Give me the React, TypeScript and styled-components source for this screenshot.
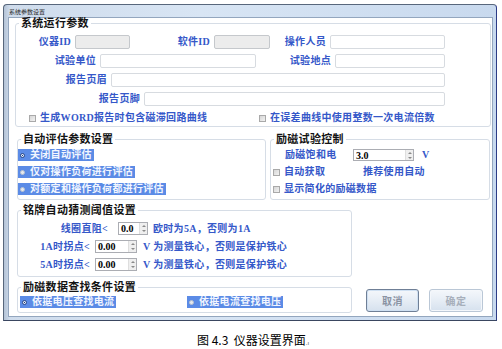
import React from "react";
import styled, { createGlobalStyle } from "styled-components";

const FONT = `"Liberation Serif", "Noto Sans CJK SC", serif`;

const GlobalStyle = createGlobalStyle`
  html, body {
    margin: 0;
    padding: 0;
    background: #ffffff;
  }
  body {
    width: 502px;
    height: 349px;
    overflow: hidden;
    font-family: ${FONT};
  }
`;

const Page = styled.div`
  padding: 4px 0 0 3px;
`;

const Window = styled.div`
  box-sizing: border-box;
  width: 494px;
  height: 317px;
  display: flex;
  flex-direction: column;
  padding: 0 3px 3px 4px;
  border: 1px solid #58677c;
  border-right-color: #2c3b86;
  border-bottom-color: #3a4660;
  border-radius: 4px 4px 0 0;
  background: linear-gradient(90deg, #b4c3d6 0, #cfdcec 6px, #d8e5f4 40%, #c8d9ee 100%);
`;

const TitleBar = styled.div`
  height: 12px;
  display: flex;
  align-items: center;
  padding-left: 1px;
  font-family: "Noto Sans CJK SC", sans-serif;
  font-size: 6px;
  color: #2a2a2a;
`;

const Client = styled.div`
  flex: 1;
  box-sizing: border-box;
  padding-left: 8px;
  background: #ffffff;
  border: 1px solid #93a6be;
  display: flex;
  flex-direction: column;
`;

const Group = styled.fieldset<{ $w: number; $ml?: number; $pt: number; $pb: number }>`
  box-sizing: border-box;
  min-width: 0;
  width: ${(p) => p.$w}px;
  margin: 0 0 0 ${(p) => p.$ml ?? 0}px;
  padding: ${(p) => p.$pt}px 0 ${(p) => p.$pb}px 0;
  border: 1px solid #d6dde6;
  border-radius: 3px;
`;

const Legend = styled.legend`
  margin-left: 3px;
  padding: 0 2px;
  font-size: 11px;
  line-height: 10px;
  font-weight: bold;
  color: #141414;
  letter-spacing: 0.3px;
`;

const Rows = styled.div<{ $gap: number }>`
  display: flex;
  flex-direction: column;
  gap: ${(p) => p.$gap}px;
`;

const Row = styled.div<{ $pl?: number; $h: number }>`
  display: flex;
  align-items: center;
  height: ${(p) => p.$h}px;
  padding-left: ${(p) => p.$pl ?? 0}px;
`;

const Label = styled.span<{ $w?: number; $ml?: number; $right?: boolean }>`
  flex: none;
  width: ${(p) => (p.$w ? `${p.$w}px` : "auto")};
  margin-left: ${(p) => p.$ml ?? 0}px;
  text-align: ${(p) => (p.$right ? "right" : "left")};
  white-space: nowrap;
  font-size: 10px;
  line-height: 12px;
  font-weight: bold;
  letter-spacing: 0.3px;
  color: #3558c9;
`;

const TextBox = styled.input<{ $w: number }>`
  flex: none;
  box-sizing: border-box;
  width: ${(p) => p.$w}px;
  height: 14px;
  margin: 0 0 0 4px;
  padding: 0 2px;
  border: 1px solid #d7dbe0;
  border-radius: 2px;
  background: #ffffff;
  font-family: ${FONT};
  font-size: 10px;
  outline: none;

  &:disabled {
    border-color: #c5c8cc;
    background: #ececec;
  }
`;

const CheckItem = styled.label<{ $w?: number }>`
  flex: none;
  display: inline-flex;
  align-items: center;
  width: ${(p) => (p.$w ? `${p.$w}px` : "auto")};
`;

const CheckBox = styled.span`
  flex: none;
  box-sizing: border-box;
  width: 7px;
  height: 7px;
  margin-right: 4px;
  border: 1px solid #a9a9a9;
  background: linear-gradient(135deg, #d6d6d6, #f2f2f2);
`;

const RadioItem = styled.label`
  flex: none;
  display: inline-flex;
  align-items: center;
  height: 12px;
  padding: 0 2px 0 1px;
  background: #5b8be6;
`;

const RadioText = styled.span`
  font-size: 10px;
  line-height: 12px;
  font-weight: bold;
  letter-spacing: 0.3px;
  white-space: nowrap;
  color: #f2f6ff;
`;

const RadioDot = styled.span<{ $checked?: boolean }>`
  flex: none;
  box-sizing: border-box;
  width: 5px;
  height: 5px;
  margin: 0 5px 0 1px;
  border-radius: 50%;
  border: 1px solid ${(p) => (p.$checked ? "#34508a" : "#b9c2d0")};
  background: ${(p) => (p.$checked ? "radial-gradient(circle, #1d3a78 40%, #dfe7f5 45%)" : "#e6e9ee")};
`;

const RadioSlot = styled.div<{ $w: number }>`
  flex: none;
  display: flex;
  width: ${(p) => p.$w}px;
`;

const Spin = styled.div<{ $w: number; $ml: number; $h: number }>`
  flex: none;
  box-sizing: border-box;
  display: flex;
  width: ${(p) => p.$w}px;
  height: ${(p) => p.$h}px;
  margin-left: ${(p) => p.$ml}px;
  border: 1px solid #abadb3;
  background: #ffffff;
`;

const SpinValue = styled.span`
  flex: 1;
  display: flex;
  align-items: center;
  padding-left: 2px;
  font-size: 10px;
  font-weight: bold;
  color: #000000;
`;

const SpinArrows = styled.div`
  width: 7px;
  display: flex;
  flex-direction: column;
  border-left: 1px solid #dedede;
  background: #efefef;
`;

const Arrow = styled.span<{ $down?: boolean }>`
  flex: 1;
  display: flex;
  align-items: center;
  justify-content: center;

  &::before {
    content: "";
    border-left: 2px solid transparent;
    border-right: 2px solid transparent;
    ${(p) => (p.$down ? "border-top: 2px solid #8a8a8a;" : "border-bottom: 2px solid #8a8a8a;")}
  }
`;

const GroupRow = styled.div<{ $mt: number }>`
  display: flex;
  align-items: stretch;
  gap: 4px;
  margin-top: ${(p) => p.$mt}px;
`;

const BottomRow = styled.div`
  display: flex;
  align-items: flex-end;
  margin-top: 5px;
`;

const ButtonBar = styled.div`
  display: flex;
  gap: 10px;
  margin: 0 0 1px 14px;
`;

const DialogButton = styled.button<{ $primary?: boolean; $w: number }>`
  box-sizing: border-box;
  width: ${(p) => p.$w}px;
  height: 23px;
  padding: 0;
  border: 1px solid ${(p) => (p.$primary ? "#6f7f96" : "#bac7d6")};
  border-radius: 3px;
  background: linear-gradient(#f4f7fb, #e6edf5 50%, #d6e1ee);
  box-shadow: inset 0 0 0 1px ${(p) => (p.$primary ? "#cfe0f2" : "#f4f7fb")};
  font-family: ${FONT};
  font-size: 10px;
  font-weight: bold;
  letter-spacing: 0.5px;
  color: ${(p) => (p.$primary ? "#8a93a3" : "#a7afbb")};
`;

const Caption = styled.div`
  margin-top: 12px;
  padding-left: 194px;
  font-family: "Noto Sans CJK SC", sans-serif;
  font-size: 12px;
  line-height: 14px;
  color: #000000;
  white-space: pre;
`;

const Mark = styled.span`
  font-size: 6px;
  color: #555555;
`;

const Spinner: React.FC<{ value: string; w: number; ml: number; h: number }> = ({ value, w, ml, h }) => (
  <Spin $w={w} $ml={ml} $h={h}>
    <SpinValue>{value}</SpinValue>
    <SpinArrows>
      <Arrow />
      <Arrow $down />
    </SpinArrows>
  </Spin>
);

const Check: React.FC<{ text: string; w?: number }> = ({ text, w }) => (
  <CheckItem $w={w}>
    <CheckBox />
    <Label>{text}</Label>
  </CheckItem>
);

const Radio: React.FC<{ text: string; checked?: boolean }> = ({ text, checked }) => (
  <RadioItem>
    <RadioDot $checked={checked} />
    <RadioText>{text}</RadioText>
  </RadioItem>
);

export default function App() {
  return (
    <>
      <GlobalStyle />
      <Page>
        <Window>
          <TitleBar>系统参数设置</TitleBar>
          <Client>
            <Group $w={476} $ml={-2} $pt={7} $pb={1}>
              <Legend>系统运行参数</Legend>
              <Rows $gap={5}>
                <Row $h={14} $pl={14}>
                  <Label $w={41} $right>仪器ID</Label>
                  <TextBox $w={55} disabled />
                  <Label $w={70} $ml={10} $right>软件ID</Label>
                  <TextBox $w={56} disabled />
                  <Label $w={51} $ml={5} $right>操作人员</Label>
                  <TextBox $w={115} />
                </Row>
                <Row $h={14} $pl={31}>
                  <Label $w={49} $right>试验单位</Label>
                  <TextBox $w={156} />
                  <Label $w={60} $ml={15} $right>试验地点</Label>
                  <TextBox $w={110} />
                </Row>
                <Row $h={14} $pl={31}>
                  <Label $w={60} $right>报告页眉</Label>
                  <TextBox $w={334} />
                </Row>
                <Row $h={14} $pl={64}>
                  <Label $w={60} $right>报告页脚</Label>
                  <TextBox $w={301} />
                </Row>
                <Row $h={14} $pl={13}>
                  <Check w={230} text="生成WORD报告时包含磁滞回路曲线" />
                  <Check text="在误差曲线中使用整数一次电流倍数" />
                </Row>
              </Rows>
            </Group>

            <GroupRow $mt={7}>
              <Group $w={249} $pt={5} $pb={4}>
                <Legend>自动评估参数设置</Legend>
                <Rows $gap={5}>
                  <Row $h={12}>
                    <Radio text="关闭自动评估" checked />
                  </Row>
                  <Row $h={12}>
                    <Radio text="仅对操作负荷进行评估" />
                  </Row>
                  <Row $h={12}>
                    <Radio text="对额定和操作负荷都进行评估" />
                  </Row>
                </Rows>
              </Group>
              <Group $w={220} $pt={5} $pb={4}>
                <Legend>励磁试验控制</Legend>
                <Rows $gap={5}>
                  <Row $h={12} $pl={14}>
                    <Label $w={68}>励磁饱和电</Label>
                    <Spinner value="3.0" w={61} ml={0} h={12} />
                    <Label $ml={8}>V</Label>
                  </Row>
                  <Row $h={12} $pl={2}>
                    <Check w={90} text="自动获取" />
                    <Label>推荐使用自动</Label>
                  </Row>
                  <Row $h={12} $pl={2}>
                    <Check text="显示简化的励磁数据" />
                  </Row>
                </Rows>
              </Group>
            </GroupRow>

            <GroupRow $mt={5}>
              <Group $w={335} $pt={7} $pb={5}>
                <Legend>铭牌自动猜测阈值设置</Legend>
                <Rows $gap={5}>
                  <Row $h={13}>
                    <Label $w={90} $right>线圈直阻&lt;</Label>
                    <Spinner value="0.0" w={30} ml={10} h={13} />
                    <Label $ml={5}>欧时为5A，否则为1A</Label>
                  </Row>
                  <Row $h={13}>
                    <Label $w={72} $right>1A时拐点&lt;</Label>
                    <Spinner value="0.00" w={42} ml={5} h={13} />
                    <Label $ml={6}>V 为测量铁心，否则是保护铁心</Label>
                  </Row>
                  <Row $h={13}>
                    <Label $w={72} $right>5A时拐点&lt;</Label>
                    <Spinner value="0.00" w={42} ml={5} h={13} />
                    <Label $ml={6}>V 为测量铁心，否则是保护铁心</Label>
                  </Row>
                </Rows>
              </Group>
            </GroupRow>

            <BottomRow>
              <Group $w={335} $pt={4} $pb={4}>
                <Legend>励磁数据查找条件设置</Legend>
                <Row $h={12} $pl={2}>
                  <RadioSlot $w={167}>
                    <Radio text="依据电压查找电流" checked />
                  </RadioSlot>
                  <Radio text="依据电流查找电压" />
                </Row>
              </Group>
              <ButtonBar>
                <DialogButton $primary $w={53}>取消</DialogButton>
                <DialogButton $w={54}>确定</DialogButton>
              </ButtonBar>
            </BottomRow>
          </Client>
        </Window>
        <Caption>
          图 4.3  仪器设置界面<Mark>.ı</Mark>
        </Caption>
      </Page>
    </>
  );
}
